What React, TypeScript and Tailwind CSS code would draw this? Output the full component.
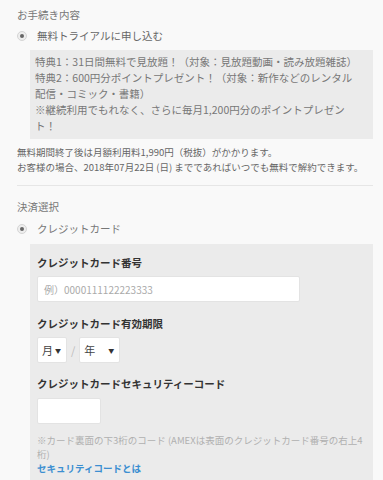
const font = {
  fontFamily: '"Noto Sans CJK JP", "Noto Sans", sans-serif',
};

function Radio() {
  return (
    <span className="flex h-[10px] w-[10px] items-center justify-center rounded-full border border-[#d5d5d5] bg-[#eeeeee]">
      <span className="h-[4px] w-[4px] rounded-full bg-[#666]" />
    </span>
  );
}

function SelectBox({ label, width }: { label: string; width: string }) {
  return (
    <div
      className={`flex h-[26px] items-center justify-between rounded-[2px] border border-[#e3e3e3] bg-white pl-[4px] pr-[5px] text-[11px] text-[#444] ${width}`}
    >
      <span>{label}</span>
      <span className="text-[6px] text-[#333]">▼</span>
    </div>
  );
}

export default function App() {
  return (
    <div
      className="min-h-[480px] w-[383px] overflow-hidden bg-[#f9f9f9] pl-[17px] pr-[10px] pt-[7px] text-[#666]"
      style={font}
    >
      <h2 className="text-[10.5px] leading-[16px] text-[#777]">お手続き内容</h2>
      <div className="mt-[5px] flex items-center gap-[10px]">
        <Radio />
        <span className="text-[10.5px] leading-[16px] text-[#666]">無料トライアルに申し込む</span>
      </div>

      <div className="ml-[13px] mt-[6px] whitespace-nowrap bg-[#ebebeb] pb-[5px] pl-[5px] pr-[8px] pt-[4px] text-[10.5px] leading-[16px] text-[#777]">
        <p>特典1：31日間無料で見放題！（対象：見放題動画・読み放題雑誌）</p>
        <p>
          特典2：600円分ポイントプレゼント！（対象：新作などのレンタル
          <br />
          配信・コミック・書籍）
        </p>
        <p>
          ※継続利用でもれなく、さらに毎月1,200円分のポイントプレゼン
          <br />
          ト！
        </p>
      </div>

      <div className="mt-[6px] whitespace-nowrap text-[9.5px] leading-[15px] text-[#666]">
        <p>無料期間終了後は月額利用料1,990円（税抜）がかかります。</p>
        <p>お客様の場合、2018年07月22日 (日) までであればいつでも無料で解約できます。</p>
      </div>

      <div className="mt-[10px] h-px bg-[#e6e6e6]" />

      <h2 className="mt-[13px] text-[10.5px] leading-[16px] text-[#777]">決済選択</h2>
      <div className="mt-[6px] flex items-center gap-[10px]">
        <Radio />
        <span className="text-[10.5px] leading-[16px] text-[#777]">クレジットカード</span>
      </div>

      <div className="ml-[13px] mt-[7px] bg-[#ebebeb] pb-[10px] pl-[7px] pr-[12px] pt-[11px]">
        <p className="text-[10.5px] font-bold leading-[16px] text-[#333]">クレジットカード番号</p>
        <div className="mt-[5px] flex h-[26px] w-[263px] items-center rounded-[2px] border border-[#e3e3e3] bg-white px-[6px] text-[10px] text-[#aaa]">
          例）0000111122223333
        </div>

        <p className="mt-[14px] text-[10.5px] font-bold leading-[16px] text-[#333]">クレジットカード有効期限</p>
        <div className="mt-[5px] flex items-center">
          <SelectBox label="月" width="w-[30px]" />
          <span className="mx-[4px] text-[11px] text-[#bbb]">/</span>
          <SelectBox label="年" width="w-[41px]" />
        </div>

        <p className="mt-[13px] text-[10.5px] font-bold leading-[16px] text-[#333]">クレジットカードセキュリティーコード</p>
        <div className="mt-[6px] h-[26px] w-[64px] rounded-[2px] border border-[#e3e3e3] bg-white" />

        <p className="mt-[9px] whitespace-nowrap text-[9.5px] leading-[14px] text-[#b0b0b0]">
          ※カード裏面の下3桁のコード (AMEXは表面のクレジットカード番号の右上4
          <br />
          桁)
        </p>
        <a className="block text-[9.5px] font-bold leading-[14px] text-[#3c8fd1]">セキュリティコードとは</a>
      </div>
    </div>
  );
}
